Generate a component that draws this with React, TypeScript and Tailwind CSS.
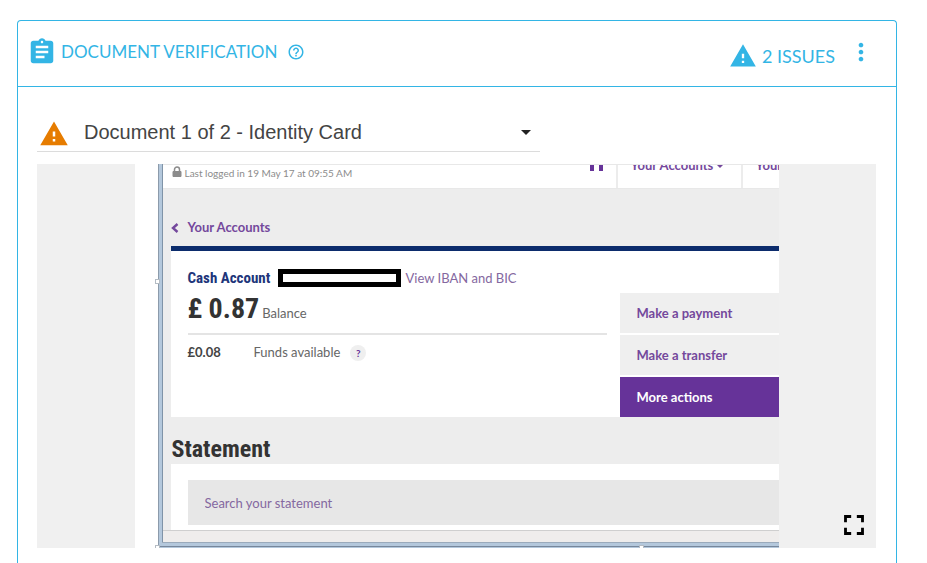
import {
  MdArrowDropDown,
  MdAssignment,
  MdFullscreen,
  MdHelpOutline,
  MdMoreVert,
  MdWarning,
} from "react-icons/md";

const documents = ["Document 1 of 2 - Identity Card", "Document 2 of 2 - Bank Statement"];

const accountActions = [
  { label: "Make a payment", active: false },
  { label: "Make a transfer", active: false },
  { label: "More actions", active: true },
];

function CardHeader() {
  return (
    <header className="flex items-center justify-between border-b border-[#33b5e5] h-[66px] pl-[9px] pr-[21px] pb-1 text-[#33b5e5] font-[Lato,sans-serif]">
      <div className="flex items-center">
        <MdAssignment className="w-[30px] h-[30px]" />
        <h1 className="ml-1 text-[17px] leading-6">DOCUMENT VERIFICATION</h1>
        <button type="button" aria-label="Help" className="ml-2.5">
          <MdHelpOutline className="w-[18px] h-[18px]" />
        </button>
      </div>
      <div className="flex items-center">
        <a href="#issues" className="flex items-center gap-1 pt-2">
          <MdWarning className="w-[30px] h-7" />
          <span className="text-lg leading-6">2 ISSUES</span>
        </a>
        <button type="button" aria-label="More options" className="ml-3">
          <MdMoreVert className="w-7 h-7" />
        </button>
      </div>
    </header>
  );
}

function DocumentPicker() {
  return (
    <div className="relative flex items-center w-3/5 h-9 border-b border-[#dcdcdc]">
      <MdWarning className="w-[30px] h-[30px] ml-0.5 text-[#e67c00]" />
      <select
        aria-label="Document"
        className="appearance-none flex-1 pl-[15px] pb-1 bg-transparent outline-none text-xl leading-8 text-[#444] font-['Liberation_Sans',sans-serif]"
      >
        {documents.map((doc) => (
          <option key={doc}>{doc}</option>
        ))}
      </select>
      <MdArrowDropDown className="absolute right-0.5 top-1 w-6 h-6 text-[#222] pointer-events-none" />
    </div>
  );
}

function BankHeader() {
  return (
    <div className="flex h-[25px] border-y border-[#e8e8e8] bg-white overflow-hidden">
      <div className="flex flex-1 items-start pl-[9px] text-[#8c8c8c]">
        <svg viewBox="0 0 10 12" className="w-2.5 h-3 mt-px" fill="none" stroke="currentColor">
          <path d="M1 5.500h8v5H1z" fill="currentColor" />
          <path d="M2.500 5.500V3.500a2.500 2.500 0 0 1 5 0v2" strokeWidth="1.5" />
        </svg>
        <span className="ml-[3px] text-[10px] leading-4">Last logged in 19 May 17 at 09:55 AM</span>
      </div>
      {/* only the bottom of the nav is in view */}
      <div className="flex items-start w-[26px]">
        <svg viewBox="0 0 13 6" className="w-[13px] h-1.5 text-[#663399]" fill="currentColor">
          <path d="M0 0h4v6H0zM9 0h4v6H9z" />
        </svg>
      </div>
      <a href="#accounts" className="flex items-start w-[125px] border-l-2 border-[#ececec] pl-[13px] text-[#74489c] text-[13px] font-bold">
        <span className="-mt-2 leading-4 whitespace-nowrap">Your Accounts</span>
        <svg viewBox="0 0 6 4" className="w-1.5 h-1 ml-1" fill="currentColor">
          <path d="M0 0h6L3 3z" />
        </svg>
      </a>
      <a href="#profile" className="w-[38px] border-l-2 border-[#ececec] pl-[13px] text-[#74489c] text-[13px] font-bold">
        <span className="block -mt-2 leading-4">Your</span>
      </a>
    </div>
  );
}

function AccountPanel() {
  return (
    <section className="flex h-[171px] ml-2 border-t-[5px] border-[#0c2c6c] bg-white">
      <div className="flex-1 pl-[17px] pr-[13px] pt-4">
        <div className="flex items-center h-[22px]">
          <h2 className="w-[90px] whitespace-nowrap text-[15px] leading-5 font-bold text-[#20357a] font-['Roboto_Condensed','Open_Sans_Condensed',sans-serif]">
            Cash Account
          </h2>
          <span className="w-[123px] h-[18px] border-[5px] border-black bg-white" />
          <a href="#iban" className="ml-[5px] text-[13px] leading-5 text-[#8468a0]">
            View IBAN and BIC
          </a>
        </div>
        <div className="flex items-baseline gap-[3px] h-[46px] border-b-2 border-[#e4e4e4]">
          <strong className="text-[28px] leading-10 text-[#333] font-['Roboto_Condensed','Open_Sans_Condensed',sans-serif]">£ 0.87</strong>
          <span className="text-[13px] leading-5 text-[#666]">Balance</span>
        </div>
        <div className="flex items-center h-9 text-[13px] text-[#666]">
          <strong className="w-[66px] text-[#444]">£0.08</strong>
          <span>Funds available</span>
          <button type="button" className="ml-2.5 w-4 h-4 rounded-full bg-[#efefef] text-[10px] leading-4 font-bold text-[#663399]">
            ?
          </button>
        </div>
      </div>
      <div className="flex flex-col gap-0.5 w-[159px] pt-[42px]">
        {accountActions.map((action) => (
          <button
            key={action.label}
            type="button"
            className={`flex-1 pl-[17px] pt-0.5 text-left text-[13px] font-bold ${
              action.active ? "bg-[#663399] text-white" : "bg-[#efefef] text-[#74489c]"
            }`}
          >
            {action.label}
          </button>
        ))}
      </div>
    </section>
  );
}

function Handle({ className }: { className: string }) {
  return <span className={`absolute w-[5px] h-[5px] border border-[#b4bcc4] bg-white ${className}`} />;
}

function ScannedDocument() {
  return (
    <div className="relative w-[644px] h-96 pl-[23px] bg-white overflow-hidden font-[Lato,sans-serif]">
      <div className="flex flex-col h-full border-l-[5px] border-b-[6px] border-[#b4c8dc] bg-[#ededed]">
        <BankHeader />
        <div className="flex items-center h-[57px] pl-2 pt-5 text-[13px] font-bold text-[#74489c]">
          <svg viewBox="0 0 8 10" className="w-2 h-2.5 mr-[9px]" fill="none" stroke="currentColor" strokeWidth="2.4">
            <path d="M6.500 1 2 5l4.500 4" />
          </svg>
          <a href="#accounts">Your Accounts</a>
        </div>
        <AccountPanel />
        <h2 className="flex items-center h-[47px] pl-[9px] pt-4 text-2xl leading-7 font-bold text-[#333] font-['Roboto_Condensed','Open_Sans_Condensed',sans-serif]">
          Statement
        </h2>
        <div className="h-[66px] ml-2 pl-[17px] pt-4 bg-white">
          <input
            type="text"
            aria-label="Search your statement"
            placeholder="Search your statement"
            className="block w-full h-[45px] pl-[17px] bg-[#e7e7e7] outline-none text-[13px] text-[#74489c] placeholder:text-[#8468a0]"
          />
        </div>
        <div className="flex-1 border-t border-[#cfcfcf] bg-[#efedec]" />
      </div>
      <span className="absolute left-[23px] inset-y-0 w-px bg-[#8c9bab]" />
      <span className="absolute left-[27px] top-0 bottom-1.5 w-px bg-[#8094a8]" />
      <span className="absolute left-[27px] right-0 bottom-[5px] h-px bg-[#9aaabb]" />
      <span className="absolute left-[23px] right-0 bottom-px h-px bg-[#77879b]" />
      <Handle className="left-5 top-[115px]" />
      <Handle className="left-5 -bottom-0.5" />
      <Handle className="left-[504px] -bottom-0.5" />
    </div>
  );
}

export default function App() {
  return (
    <div className="flex flex-col min-h-screen bg-white pt-5 pl-[17px] pr-[30px]">
      <main className="flex-1 rounded-t-sm border border-b-0 border-[#33b5e5]">
        <CardHeader />
        <div className="pt-[29px] px-5 pl-[19px]">
          <DocumentPicker />
          <div className="relative flex justify-center mt-3 bg-[#f0f0f0]">
            <ScannedDocument />
            <button type="button" aria-label="Full screen" className="absolute right-[5px] bottom-1.5 text-black">
              <MdFullscreen className="w-[34px] h-[34px]" />
            </button>
          </div>
        </div>
      </main>
    </div>
  );
}
